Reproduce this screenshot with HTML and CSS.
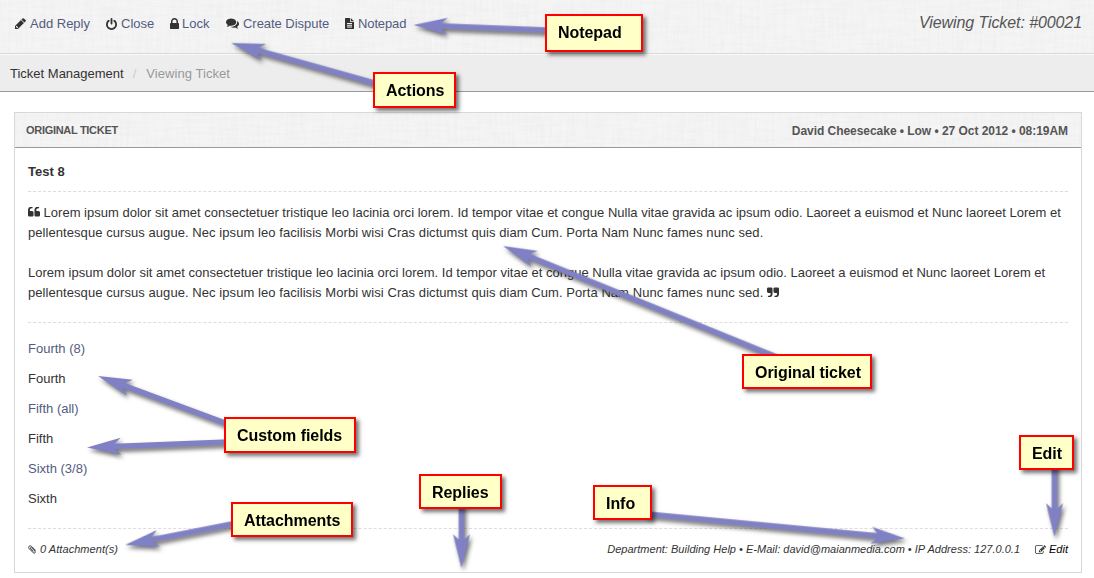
FILE: index.html
```html
<!DOCTYPE html>
<html lang="en">
<head>
<meta charset="utf-8">
<title>Viewing Ticket: #00021</title>
<link rel="stylesheet" href="styles.css">
</head>
<body>
<header class="toolbar linen">
  <svg class="weave"><use href="#weave"/></svg>
  <nav class="actions">
    <a class="action"><svg class="ic-pencil" viewBox="128 128 1536 1536"><path d="M491 1536l91-91-235-235-91 91v107h128v128h107zM960 416l416 416-832 832h-416v-416zm683 96q0 53-37 90l-166 166-416-416 166-165q36-38 90-38 53 0 91 38l235 234q37 39 37 91z"/></svg><span class="t-add">Add Reply</span></a>
    <a class="action"><svg class="ic-power" viewBox="128 0 1536 1664"><path d="M1664 896q0 156-61 298t-164 245-245 164-298 61-298-61-245-164-164-245-61-298q0-182 80.500-343t226.500-270q43-32 95.500-25t83.500 50q32 42 24.500 94.500t-49.500 84.500q-98 74-151.500 181t-53.500 228q0 104 40.500 198.500t109.500 163.500 163.500 109.500 198.500 40.500 198.500-40.500 163.500-109.500 109.500-163.500 40.500-198.500q0-121-53.500-228t-151.500-181q-42-32-49.500-84.500t24.500-94.500q31-43 84-50t95 25q146 109 226.500 270t80.500 343zm-640-768v640q0 52-38 90t-90 38-90-38-38-90v-640q0-52 38-90t90-38 90 38 38 90z"/></svg><span class="t-close">Close</span></a>
    <a class="action"><svg class="ic-lock" viewBox="320 128 1152 1408"><path d="M640 768h512v-192q0-106-75-181t-181-75-181 75-75 181v192zm832 96v576q0 40-28 68t-68 28h-960q-40 0-68-28t-28-68v-576q0-40 28-68t68-28h32v-192q0-184 132-316t316-132 316 132 132 316v192h32q40 0 68 28t28 68z"/></svg><span class="t-lock">Lock</span></a>
    <a class="action"><svg class="ic-comments" viewBox="0 256 1792 1408"><path d="M1408 768q0 139-94 257t-256.500 186.500-353.500 68.500q-86 0-176-16-124 88-278 128-36 9-86 16h-3q-11 0-20.500-8t-11.500-21q-1-3-1-6.500t.5-6.500 2-6l2.500-5 3.500-5.500 4-5 4.500-5 4-4.500q5-6 23-25t26-29.500 22.500-29 25-38.500 20.500-44q-124-72-195-177t-71-224q0-139 94-257t256.500-186.500 353.500-68.500 353.500 68.500 256.500 186.500 94 257zm384 256q0 120-71 224.500t-195 176.500q10 24 20.500 44t25 38.500 22.500 29 26 29.500 23 25q1 1 4 4.500t4.500 5 4 5 3.500 5.500l2.500 5 2 6 .5 6.500-1 6.500q-3 14-13 22t-22 7q-50-7-86-16-154-40-278-128-90 16-176 16-271 0-472-132 58 4 88 4 161 0 309-45t264-129q125-92 192-212t67-254q0-77-23-152 129 71 204 178t75 230z"/></svg><span class="t-dispute">Create Dispute</span></a>
    <a class="action"><svg class="ic-file" viewBox="0 0 18 22"><path fill-rule="evenodd" d="M1 0h9v7q0 1 1 1h7v13q0 1-1 1H1q-1 0-1-1V1q0-1 1-1zM11.500 0l6.500 6.500h-6.500zM4 10v1.800h10V10zM4 13.500v1.800h10v-1.800zM4 17v1.800h10V17z"/></svg><span class="t-note">Notepad</span></a>
  </nav>
  <h1 class="page-title">Viewing Ticket: #00021</h1>
</header>
<nav class="crumbs"><a>Ticket Management</a><span class="slash">/</span><span class="here">Viewing Ticket</span></nav>
<main class="card">
  <header class="card-head linen"><svg class="weave"><use href="#weave"/></svg><h2 class="card-title">ORIGINAL TICKET</h2><span class="card-meta">David Cheesecake • Low • 27 Oct 2012 • 08:19AM</span></header>
  <div class="card-body">
    <h3 class="subject">Test 8</h3>
    <section class="message">
      <p><svg class="ic-quote" viewBox="64 256 1664 1280"><use href="#quote"/></svg> Lorem ipsum dolor sit amet consectetuer tristique leo lacinia orci lorem. Id tempor vitae et congue Nulla vitae gravida ac ipsum odio. Laoreet a euismod et Nunc laoreet Lorem et<br><span class="line-b">pellentesque cursus augue. Nec ipsum leo facilisis Morbi wisi Cras dictumst quis diam Cum. Porta Nam Nunc fames nunc sed.</span></p>
      <p>Lorem ipsum dolor sit amet consectetuer tristique leo lacinia orci lorem. Id tempor vitae et congue Nulla vitae gravida ac ipsum odio. Laoreet a euismod et Nunc laoreet Lorem et<br><span class="line-b">pellentesque cursus augue. Nec ipsum leo facilisis Morbi wisi Cras dictumst quis diam Cum. Porta Nam Nunc fames nunc sed.</span> <svg class="ic-quote" viewBox="64 256 1664 1280"><use href="#quote" transform="rotate(180 896 896)"/></svg></p>
    </section>
    <dl class="fields">
      <dt>Fourth (8)</dt><dd>Fourth</dd>
      <dt>Fifth (all)</dt><dd>Fifth</dd>
      <dt>Sixth (3/8)</dt><dd>Sixth</dd>
    </dl>
    <footer class="card-foot">
      <span class="attach"><svg class="ic-clip" viewBox="0 0 18 18"><path d="M15.500 11L7 2.800C5.500 1.300 3.500 1.500 2.300 2.700S1 6 2.500 7.500l8 8c1.200 1.100 2.600 1 3.500.2s1-2.200 0-3.300L7 5.500c-.6-.6-1.500-.6-2 0s-.5 1.300.1 2l5.700 5.600"/></svg>0 Attachment(s)</span>
      <span class="info"><span class="t-info">Department: Building Help • E-Mail: david@maianmedia.com • IP Address: 127.0.0.1</span><a class="edit"><svg class="ic-edit" viewBox="0 128 1792 1408"><path d="M888 1184l116-116-152-152-116 116v56h96v96h56zm440-720q-16-16-33 1l-350 350q-17 17-1 33t33-1l350-350q17-17 1-33zm80 594v190q0 119-84.500 203.500t-203.500 84.500h-832q-119 0-203.500-84.500t-84.500-203.500v-832q0-119 84.500-203.500t203.500-84.500h832q63 0 117 25 15 7 18 23 3 17-9 29l-49 49q-14 14-32 8-23-6-45-6h-832q-66 0-113 47t-47 113v832q0 66 47 113t113 47h832q66 0 113-47t47-113v-126q0-13 9-22l64-64q15-15 35-7t20 29zm-96-738l288 288-672 672h-288v-288zm444 132l-92 92-288-288 92-92q28-28 68-28t68 28l152 152q28 28 28 68t-28 68z"/></svg>Edit</a></span>
    </footer>
  </div>
</main>

<!-- Annotation layer: arrows and callouts -->
<svg class="arrows" viewBox="0 0 1094 578">
  <defs>
    <filter id="warp" x="0" y="0" width="100%" height="100%"><feTurbulence type="fractalNoise" baseFrequency=".35 .03" numOctaves="3" seed="4"/><feColorMatrix values="0 0 0 0 .5  0 0 0 0 .5  0 0 0 0 .5  .14 0 0 0 -.05"/></filter>
    <filter id="weft" x="0" y="0" width="100%" height="100%"><feTurbulence type="fractalNoise" baseFrequency=".03 .35" numOctaves="3" seed="9"/><feColorMatrix values="0 0 0 0 .5  0 0 0 0 .5  0 0 0 0 .5  .14 0 0 0 -.05"/></filter>
    <g id="weave"><rect width="1094" height="53" filter="url(#warp)"/><rect width="1094" height="53" filter="url(#weft)"/></g>
    <path id="quote" d="M832 960v384q0 80-56 136t-136 56h-384q-80 0-136-56t-56-136v-704q0-104 40.500-198.500t109.500-163.500 163.500-109.500 198.500-40.500h64q26 0 45 19t19 45v128q0 26-19 45t-45 19h-64q-106 0-181 75t-75 181v32q0 40 28 68t68 28h224q80 0 136 56t56 136zm896 0v384q0 80-56 136t-136 56h-384q-80 0-136-56t-56-136v-704q0-104 40.500-198.500t109.500-163.500 163.500-109.500 198.500-40.500h64q26 0 45 19t19 45v128q0 26-19 45t-45 19h-64q-106 0-181 75t-75 181v32q0 40 28 68t68 28h224q80 0 136 56t56 136z"/>
    <path id="head" d="M0 0L34-8.500 28-2.600V2.600L34 8.500z"/>
  </defs>
  <g class="shadowed">
  <g transform="translate(413.500 25) rotate(2.200)"><use href="#head"/><path d="M27-2.700H138V2.700H27z"/></g>
  <g transform="translate(231 43) rotate(15.600)"><use href="#head"/><path d="M27-2.700H152V2.700H27z"/></g>
  <g transform="translate(503 246) rotate(22.100)"><use href="#head"/><path d="M27-2.700H300V2.700H27z"/></g>
  <g transform="translate(98 376) rotate(20.300)"><use href="#head"/><path d="M27-2.700H142V2.700H27z"/></g>
  <g transform="translate(87 447.500) rotate(-2.200)"><use href="#head"/><path d="M27-2.700H142V2.700H27z"/></g>
  <g transform="translate(125 545) rotate(-11.100)"><use href="#head"/><path d="M27-2.700H114V2.700H27z"/></g>
  <g transform="translate(461.500 568) rotate(-90)"><use href="#head"/><path d="M27-2.700H64V2.700H27z"/></g>
  <g transform="translate(905 538.500) rotate(185.400)"><use href="#head"/><path d="M27-2.700H260V2.700H27z"/></g>
  <g transform="translate(1054.500 537) rotate(-90)"><use href="#head"/><path d="M27-2.700H72V2.700H27z"/></g>
  </g>
</svg>
<div class="callout c-notepad">Notepad</div>
<div class="callout c-actions">Actions</div>
<div class="callout c-original">Original ticket</div>
<div class="callout c-custom">Custom fields</div>
<div class="callout c-attachments">Attachments</div>
<div class="callout c-replies">Replies</div>
<div class="callout c-info">Info</div>
<div class="callout c-edit">Edit</div>
</body>
</html>
```

FILE: styles.css
```css
* { box-sizing: border-box; }
html, body { height: 578px; overflow: hidden; }
body { position: relative; margin: 0; background: #fff; color: #333; font: 13px/20px "Liberation Sans", Arial, sans-serif; }
h1, h2, h3, p, dl, dd { margin: 0; }
svg { fill: #333; flex: none; }

.linen { position: relative; isolation: isolate; background: #f5f5f5; }
.weave { position: absolute; z-index: -1; inset: 0; width: 100%; height: 100%; overflow: hidden; }
.toolbar { display: flex; justify-content: space-between; height: 54px; padding: 13px 12px 0 15px; border-bottom: 1px solid #d9d9d9; }
.actions { display: flex; gap: 16px; }
.action { display: flex; align-items: center; height: 21px; color: #535c80; white-space: nowrap; }
.ic-pencil { width: 11px; height: 11px; margin-right: 4px; }
.ic-power { width: 11px; height: 12px; margin-right: 4px; }
.ic-lock { width: 9px; height: 11px; margin-right: 3px; }
.ic-comments { width: 13px; height: 11px; margin-right: 4px; }
.ic-file { width: 9px; height: 11px; margin-right: 4px; }
.t-add { width: 60px; }
.t-close { width: 33px; }
.t-lock { width: 28px; }
.t-dispute { width: 86px; letter-spacing: -.04px; }
.t-note { letter-spacing: -.12px; }
.page-title { color: #555; font-size: 16px; font-style: italic; font-weight: 400; line-height: 19px; letter-spacing: -.09px; }
.crumbs { display: flex; height: 38px; padding: 9px 10px 0; background: #ededed; border-top: 1px solid #fafafa; border-bottom: 1px solid #999; }
.slash { margin: 0 9px; color: #ccc; }
.here { color: #999; letter-spacing: .06px; margin-left: 1px; }

.card { width: 1068px; height: 461px; margin: 20px 0 0 14px; border: 1px solid #d8d8d8; }
.card-head { display: flex; justify-content: space-between; height: 35px; padding: 8px 13px 0 11px; border-bottom: 1px solid #999; color: #555; }
.card-title { font-size: 11px; line-height: 19px; letter-spacing: -.3px; }
.card-meta { font-size: 12px; font-weight: 700; line-height: 20px; letter-spacing: -.04px; }
.card-body { padding: 13px 13px 0; }
.subject { height: 31px; padding-top: 1px; font-size: 13px; line-height: 20px; border-bottom: 1px dashed #ddd; }
.message { display: grid; align-content: start; gap: 20px; height: 131px; padding-top: 11px; border-bottom: 1px dashed #ddd; white-space: nowrap; letter-spacing: .007px; }
.line-b { letter-spacing: .064px; }
.ic-quote { width: 12px; height: 10px; }
.fields { height: 206px; padding-top: 11px; border-bottom: 1px dashed #ddd; line-height: 30px; }
.fields dt { color: #535c80; }
.card-foot { display: flex; justify-content: space-between; padding-top: 10px; font-size: 11px; font-style: italic; }
.attach, .info, .edit { display: flex; align-items: center; white-space: nowrap; }
.attach { letter-spacing: .05px; }
.ic-clip { width: 9px; height: 9px; margin-right: 3px; fill: none; stroke: #222; stroke-width: 1.8; }
.t-info { letter-spacing: .012px; }
.ic-edit { width: 11px; height: 9px; margin-right: 3px; }
.edit { margin-left: 15px; color: #000; }

.arrows { position: absolute; inset: 0; width: 1094px; height: 578px; }
.shadowed { fill: #8080c4; filter: drop-shadow(2px 3px 2px rgba(0,0,0,.55)); }
.callout { position: absolute; display: flex; align-items: center; padding: 2px 0 0 11px; border: 2px solid #f00; background: #ffffc8; box-shadow: 3px 3px 4px rgba(0,0,0,.55); color: #000; font-size: 16px; font-weight: 700; white-space: nowrap; letter-spacing: -.05px; }
.c-notepad { left: 545px; top: 14px; width: 98px; height: 38px; padding-top: 0; }
.c-actions { left: 373px; top: 72px; width: 83px; height: 36px; }
.c-original { left: 742px; top: 354px; width: 130px; height: 35px; }
.c-custom { left: 224px; top: 417px; width: 132px; height: 36px; }
.c-attachments { left: 231px; top: 502px; width: 122px; height: 35px; }
.c-replies { left: 419px; top: 474px; width: 83px; height: 35px; }
.c-info { left: 593px; top: 485px; width: 59px; height: 35px; }
.c-edit { left: 1019px; top: 435px; width: 55px; height: 35px; }
```
